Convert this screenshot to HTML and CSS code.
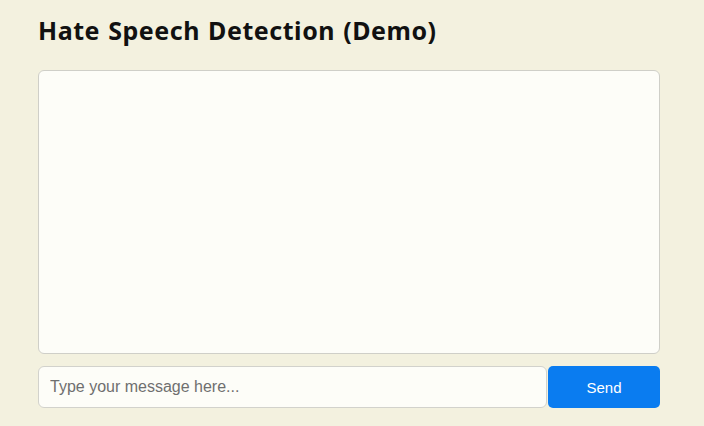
FILE: index.html
```html
<!DOCTYPE html>
<html>
<head>
<meta charset="utf-8">
<link rel="stylesheet" href="styles.css">
</head>
<body>
<div class="app">
  <h1 class="title">Hate Speech Detection (Demo)</h1>
  <div class="chat-box"></div>
  <div class="input-row">
    <input class="msg-input" type="text" placeholder="Type your message here...">
    <button class="send-btn">Send</button>
  </div>
</div>
</body>
</html>
```

FILE: styles.css
```css
html, body {
  margin: 0;
  padding: 0;
  background: #f3f1df;
}
body {
  padding: 14px 44px 0 38px;
  font-family: "Liberation Sans", Arial, sans-serif;
}
.app {
  width: 622px;
}
.title {
  margin: 0 0 24px 0;
  font-family: "Noto Sans", sans-serif;
  font-weight: 700;
  font-size: 25px;
  line-height: 32px;
  letter-spacing: 0.55px;
  word-spacing: 1px;
  color: #111;
}
.chat-box {
  height: 282px;
  border: 1px solid #cfcfc8;
  border-radius: 6px;
  background: #fdfdf8;
}
.input-row {
  display: flex;
  margin-top: 12px;
}
.msg-input {
  flex: 1;
  height: 42px;
  box-sizing: border-box;
  margin: 0 1px 0 0;
  padding: 0 11px;
  border: 1px solid #d2d2cc;
  border-radius: 6px;
  background: #fdfdf8;
  font-family: "Liberation Sans", Arial, sans-serif;
  font-size: 16px;
  color: #333;
  outline: none;
}
.msg-input::placeholder {
  color: #6f6f6f;
}
.send-btn {
  width: 112px;
  height: 42px;
  border: none;
  border-radius: 5px;
  background: #0a7cf0;
  color: #fff;
  font-family: "Liberation Sans", Arial, sans-serif;
  font-size: 15px;
  padding: 0;
}
```
